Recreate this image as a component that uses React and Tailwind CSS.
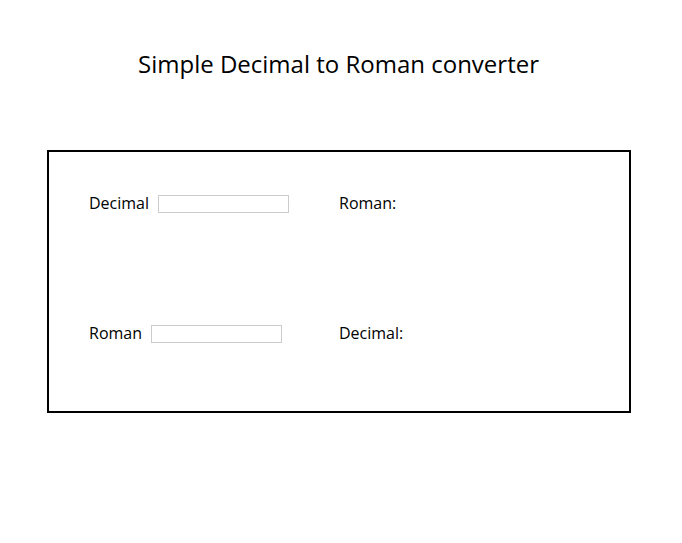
export default function App() {
  return (
    <div className="w-[682px] h-[543px] bg-white text-black" style={{ fontFamily: '"Open Sans", sans-serif' }}>
      <h1 className="pt-[47px] text-center text-[24px] leading-[33px] pr-[5px]">Simple Decimal to Roman converter</h1>
      <div className="ml-[47px] mt-[70px] w-[584px] h-[263px] border-2 border-black pl-[40px]">
        <div className="flex items-start h-[20px] mt-[42px]">
          <div className="w-[250px] flex items-start">
            <span className="text-[16px] leading-[18px]">Decimal</span>
            <input className="ml-[9px] mt-[1px] w-[131px] h-[18px] border border-[#cccccc]" />
          </div>
          <span className="text-[16px] leading-[18px]">Roman:</span>
        </div>
        <div className="flex items-start h-[20px] mt-[110px]">
          <div className="w-[250px] flex items-start">
            <span className="text-[16px] leading-[18px]">Roman</span>
            <input className="ml-[9px] mt-[1px] w-[131px] h-[18px] border border-[#cccccc]" />
          </div>
          <span className="text-[16px] leading-[18px]">Decimal:</span>
        </div>
      </div>
    </div>
  );
}
